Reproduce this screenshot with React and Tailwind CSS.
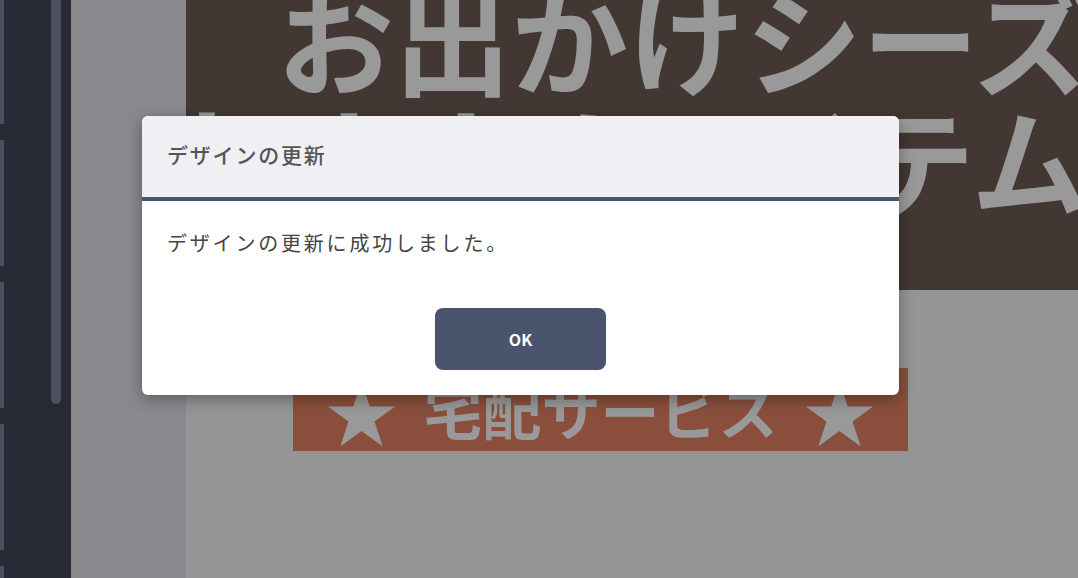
import React from "react";

const FONT = { fontFamily: '"Noto Sans CJK JP", "Noto Sans", sans-serif' };

function Sidebar() {
  return (
    <div className="flex h-full w-[71px] shrink-0 bg-[#414658]">
      <div className="flex w-[4px] flex-col gap-[16px]">
        <div className="h-[124px] shrink-0 bg-[#7d85a0]" />
        <div className="h-[126px] shrink-0 bg-[#7d85a0]" />
        <div className="h-[126px] shrink-0 bg-[#7d85a0]" />
        <div className="h-[126px] shrink-0 bg-[#7d85a0]" />
        <div className="h-[126px] shrink-0 bg-[#7d85a0]" />
      </div>
      <div className="ml-[47px] h-[404px] w-[10px] rounded-b-full bg-[#7d85a0]" />
    </div>
  );
}

function Preview() {
  return (
    <div className="flex h-full flex-1 flex-col overflow-hidden bg-[#f9f9f9]">
      <div className="h-[290px] shrink-0 overflow-hidden bg-[#715c55] font-bold text-white">
        <div className="-mt-[24px] whitespace-nowrap text-[117px] leading-[121px]">
          <div className="pl-[91px]">お出かけシーズン到来</div>
          <div className="-ml-[22px]">おすすめアイテム</div>
        </div>
      </div>
      <div className="ml-[107px] mt-[78px] flex h-[83px] w-[615px] items-center justify-center gap-[26px] whitespace-nowrap bg-[#e68464] font-bold text-white">
        <span className="text-[72px] leading-none">★</span>
        <span className="text-[59px] leading-none">宅配サービス</span>
        <span className="text-[72px] leading-none">★</span>
      </div>
    </div>
  );
}

function Dialog() {
  return (
    <div className="absolute inset-0 flex items-start bg-black/40 pl-[142px] pt-[116px]">
      <div className="w-[757px] overflow-hidden rounded-md bg-white shadow-[0_4px_16px_rgba(0,0,0,0.35)]">
        <div className="flex h-[85px] items-center border-b-[4px] border-[#4a5670] bg-[#efeff4] px-[25px] pb-[3px] text-[21px] font-medium tracking-[1.8px] text-[#555]">
          デザインの更新
        </div>
        <div className="px-[25px] pt-[28px] text-[20px] leading-[27px] tracking-[2.8px] text-[#444]">
          デザインの更新に成功しました。
        </div>
        <div className="flex justify-center pb-[25px] pt-[52px]">
          <button className="h-[62px] w-[171px] rounded-lg bg-[#4a546c] text-[16px] font-bold text-white">
            OK
          </button>
        </div>
      </div>
    </div>
  );
}

export default function App() {
  return (
    <div className="relative flex h-[578px] w-[1078px] overflow-hidden" style={FONT}>
      <Sidebar />
      <div className="h-full w-[115px] shrink-0 bg-[#e6e6ed]" />
      <Preview />
      <Dialog />
    </div>
  );
}
